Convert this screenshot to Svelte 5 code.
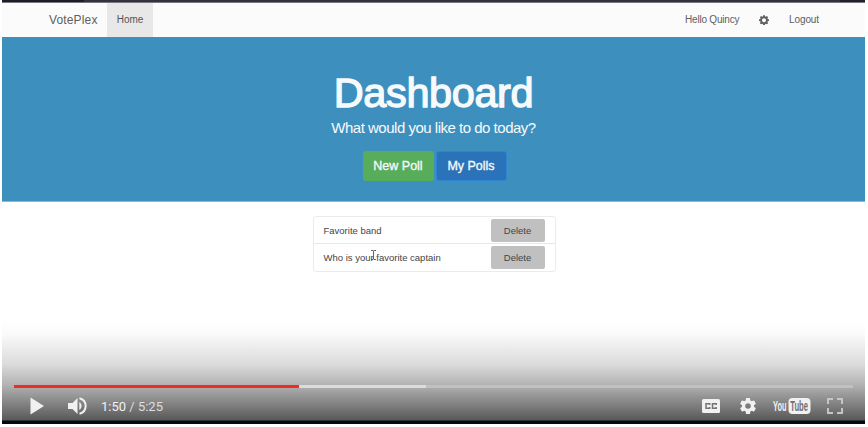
<script>
  const polls = ['Favorite band', 'Who is your favorite captain'];
  const played = 34;
  const loaded = 49.05;
</script>

<div class="player">
  <div class="browser"></div>
  <nav>
    <span class="brand">VotePlex</span>
    <span class="home">Home</span>
    <span class="hello">Hello Quincy</span>
    <svg class="cog" viewBox="0 0 24 24"><path fill="#5f5f5f" fill-rule="evenodd" d="M10 2h4l.7 3 1.8.8 2.6-1.7 2.8 2.8-1.7 2.6.8 1.8 3 .7v4l-3 .7-.8 1.8 1.7 2.6-2.8 2.8-2.6-1.7-1.8.8-.7 3h-4l-.7-3-1.8-.8-2.6 1.7-2.8-2.8 1.7-2.6-.8-1.8-3-.7v-4l3-.7.8-1.8-1.7-2.6 2.8-2.8 2.6 1.7 1.8-.8zM12 9a4.800 4.800 0 1 0 .01 0z" transform="translate(0 -1.5)" /></svg>
    <span class="logout">Logout</span>
  </nav>
  <header>
    <h1>Dashboard</h1>
    <p>What would you like to do today?</p>
    <div class="actions">
      <button class="new">New Poll</button>
      <button class="mine">My Polls</button>
    </div>
  </header>
  <ul>
    {#each polls as poll}
      <li><span>{poll}</span><button>Delete</button></li>
    {/each}
  </ul>
  <svg class="cursor" viewBox="0 0 7 10"><path d="M1 .5h2l.5.5.5-.5h2M3.5 1v8M1 9.5h2l.5-.5.5.5h2" fill="none" stroke="#555" stroke-width=".9" /></svg>

  <div class="chrome">
    <div class="track">
      <div class="loaded" style="width:{loaded}%"></div>
      <div class="played" style="width:{played}%"></div>
    </div>
    <div class="controls">
      <svg class="play" width="14" height="18" viewBox="0 0 14 18"><path d="M.5 0.5 14 9 .5 17.5z" fill="#f1f1f1" /></svg>
      <svg class="volume" width="19" height="18" viewBox="0 0 19 18"><path d="M0 6h4.500l5-5v16l-5-5H0zM11.300 5c3 1.500 3 6.500 0 8z" fill="#f1f1f1" /><path d="M11.500 1.300c8.200 2.200 8.200 13.200 0 15.400" fill="none" stroke="#f1f1f1" stroke-width="2" /></svg>
      <span class="time"><b>1:50</b> / 5:25</span>
      <svg class="cc" width="18" height="14" viewBox="0 0 18 14"><rect width="18" height="14" rx="1.500" fill="#f1f1f1" /><path d="M7.700 6V4.800H4v4.400h3.700V8M14.200 6V4.800h-3.700v4.400h3.700V8" fill="none" stroke="#747474" stroke-width="1.500" /></svg>
      <svg class="gear" width="16" height="16" viewBox="2 2 20 20"><path fill="#f1f1f1" d="M19.430 12.980c.04-.32.07-.64.07-.98s-.03-.66-.07-.98l2.110-1.650c.19-.15.24-.42.12-.64l-2-3.460c-.12-.22-.39-.3-.61-.22l-2.490 1c-.52-.4-1.080-.73-1.690-.98l-.38-2.650A.49.49 0 0 0 14 2h-4c-.25 0-.46.18-.49.42l-.38 2.650c-.61.25-1.170.59-1.690.98l-2.490-1c-.23-.09-.49 0-.61.22l-2 3.460c-.13.22-.07.49.12.64l2.110 1.650c-.04.32-.07.65-.07.98s.03.66.07.98l-2.110 1.650c-.19.15-.24.42-.12.64l2 3.460c.12.22.39.3.61.22l2.490-1c.52.4 1.080.73 1.690.98l.38 2.650c.03.24.24.42.49.42h4c.25 0 .46-.18.49-.42l.38-2.650c.61-.25 1.170-.59 1.690-.98l2.490 1c.23.09.49 0 .61-.22l2-3.460c.12-.22.07-.49-.12-.64zM12 15.500a3.500 3.500 0 1 1 0-7 3.500 3.500 0 0 1 0 7z" /></svg>
      <svg class="youtube" width="38" height="18" viewBox="0 0 38 18">
        <rect x="15.500" y="1" width="22" height="16" rx="4" fill="#f1f1f1" />
        <text transform="translate(0 14) scale(.53 1)" fill="#f1f1f1">You</text>
        <text transform="translate(17.300 14) scale(.55 1)" fill="#707070">Tube</text>
      </svg>
      <svg class="full" width="16" height="16" viewBox="0 0 16 16"><path d="M1 6V1h5M10 1h5v5M15 10v5h-5M6 15H1v-5" fill="none" stroke="#c5c5c5" stroke-width="2" /></svg>
    </div>
  </div>
</div>

<style>
  :global(body) { background: #fff; overflow: hidden; }
  .player { position: relative; width: 863px; height: 424px; margin-left: 2px; overflow: hidden; background: #fff; font-family: "Liberation Sans", Arial, sans-serif; }
  .browser { height: 3px; box-sizing: border-box; background: linear-gradient(90deg, #1d1c27 0 82px, #34333d 82px 838px, #22212b 838px); border-bottom: 1px solid #777780; }
  nav { height: 34px; display: flex; align-items: center; background: #fbfbfb; color: #606060; font-size: 10px; white-space: nowrap; }
  nav span { line-height: 34px; }
  .brand { width: 58px; padding-left: 47px; font-size: 12px; letter-spacing: .15px; }
  .home { width: 46px; text-align: center; background: #e8e8e8; color: #555; letter-spacing: -.08px; }
  .hello { margin-left: auto; width: 74px; letter-spacing: -.2px; }
  .cog { width: 10px; height: 10px; }
  .logout { margin-left: 20px; width: 76px; letter-spacing: -.1px; }
  header { height: 165px; background: #3d90bd; color: #f7fafc; display: flex; flex-direction: column; align-items: center; border-bottom: 1px solid #8bb9d4; box-sizing: border-box; }
  h1 { margin: 33px 0 0; font-size: 41.500px; font-weight: 400; line-height: 46px; letter-spacing: -.4px; -webkit-text-stroke: 1.300px #f7fafc; }
  p { margin: 3px 0 0; font-size: 15px; line-height: 18px; letter-spacing: -.49px; white-space: nowrap; }
  .actions { display: flex; gap: 2px; margin-top: 14px; margin-left: 2px; }
  button { font-family: inherit; padding: 0; border: 0; box-sizing: border-box; }
  .actions button { width: 71px; height: 30px; border-radius: 3px; color: #f4f8fb; font-size: 12.500px; -webkit-text-stroke: .35px #f4f8fb; }
  .actions .new { background: #58ad5b; }
  .actions .mine { background: #2b73b8; border: 1px solid #2e85d8; }
  ul { list-style: none; width: 243px; box-sizing: border-box; margin: 14px 0 0 310.500px; padding: 0; border: 1px solid #ebebeb; border-radius: 3px; }
  li { height: 26px; box-sizing: border-box; display: flex; align-items: center; justify-content: space-between; padding: 0 10px; color: #444; font-size: 9.500px; white-space: nowrap; }
  li + li { height: 28px; border-top: 1px solid #e7e7e7; }
  li button { width: 54px; height: 23px; border-radius: 2px; background: #c0c0c0; color: #454545; font-size: 9.500px; }
  .cursor { position: absolute; left: 368px; top: 250px; width: 7px; height: 10px; }
  .chrome { position: absolute; left: 0; top: 320px; width: 863px; height: 104px; box-sizing: border-box; padding: 65px 12px 0; background: linear-gradient(transparent 0, rgba(0,0,0,.02) 14px, rgba(0,0,0,.145) 45px, rgba(0,0,0,.30) 65px, rgba(0,0,0,.43) 78px, rgba(0,0,0,.65) 100px, #050712 101px, #050712 104px); }
  .track { position: relative; height: 3px; background: #c0c0c0; }
  .loaded, .played { position: absolute; left: 0; top: 0; height: 3px; background: #dcdcdc; }
  .played { background: #f12b24; }
  .controls { height: 36px; display: flex; align-items: center; }
  .play { margin-left: 16px; }
  .volume { margin-left: 24px; }
  .time { margin-left: 14px; font: 13px Roboto, sans-serif; color: #dedede; white-space: nowrap; }
  .time b { font-weight: 400; color: #f1f1f1; }
  .cc { margin-left: auto; }
  .gear { margin-left: 20px; }
  .youtube { margin-left: 17px; }
  .youtube text { font: bold 14px "Liberation Sans", sans-serif; }
  .full { margin-left: 16px; margin-right: 10px; }
</style>
